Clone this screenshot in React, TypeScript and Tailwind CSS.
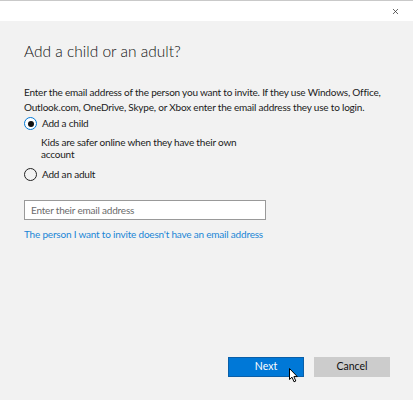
import { X } from "lucide-react";

export default function App() {
  return (
    <div className="relative flex h-[400px] w-[413px] flex-col bg-[#f2f2f2] font-['Lato',sans-serif] text-[#1a1a1a]">
      <div className="flex h-[21px] shrink-0 items-center justify-end border-t border-[#c9c9c9] bg-white pr-[13px]">
        <X className="h-[9px] w-[9px] text-[#333]" strokeWidth={2} />
      </div>

      <div className="flex flex-1 flex-col px-[24px] text-[10px] tracking-[-0.2px]">
        <h1 className="mt-[18px] text-[15.5px] font-light leading-[24px] tracking-normal text-[#111]">
          Add a child or an adult?
        </h1>

        <p className="mt-[22px] whitespace-nowrap leading-[15px]">
          Enter the email address of the person you want to invite. If they use Windows, Office,
          <br />
          Outlook.com, OneDrive, Skype, or Xbox enter the email address they use to login.
        </p>

        <div className="mt-[1px] flex h-[15px] items-center gap-[5px]">
          <span className="flex h-[13px] w-[13px] items-center justify-center rounded-full border-[1.5px] border-[#0078d7] bg-white">
            <span className="h-[6px] w-[6px] rounded-full bg-[#111]" />
          </span>
          <span className="leading-[15px]">Add a child</span>
        </div>
        <p className="mt-[5px] pl-[17px] leading-[12px]">
          Kids are safer online when they have their own
          <br />
          account
        </p>

        <div className="mt-[7px] flex h-[15px] items-center gap-[5px]">
          <span className="h-[13px] w-[13px] rounded-full border-[1.5px] border-[#222] bg-transparent" />
          <span className="leading-[15px]">Add an adult</span>
        </div>

        <div className="mt-[18px] flex h-[20px] w-[242px] items-center border-[1.5px] border-[#999] bg-white px-[6px] text-[#6b6b6b]">
          Enter their email address
        </div>

        <a className="mt-[7px] leading-[15px] text-[#1a86d6]">
          The person I want to invite doesn&apos;t have an email address
        </a>
      </div>

      <div className="flex shrink-0 justify-end gap-[10px] pb-[23px] pr-[23px] text-[10.5px]">
        <button className="flex h-[20px] w-[76px] items-center justify-center border border-[#0a5fa8] bg-[#0078d7] text-white">
          Next
        </button>
        <button className="flex h-[20px] w-[76px] items-center justify-center bg-[#cccccc] text-[#111]">
          Cancel
        </button>
      </div>

      <svg className="absolute left-[289px] top-[368px]" width="10" height="15" viewBox="0 0 10 15">
        <path d="M0.5 0.5 L0.5 11.5 L3 9.2 L5 13.8 L6.8 13 L4.9 8.6 L8.3 8.6 Z" fill="white" stroke="black" strokeWidth="1" strokeLinejoin="round" />
      </svg>
    </div>
  );
}
